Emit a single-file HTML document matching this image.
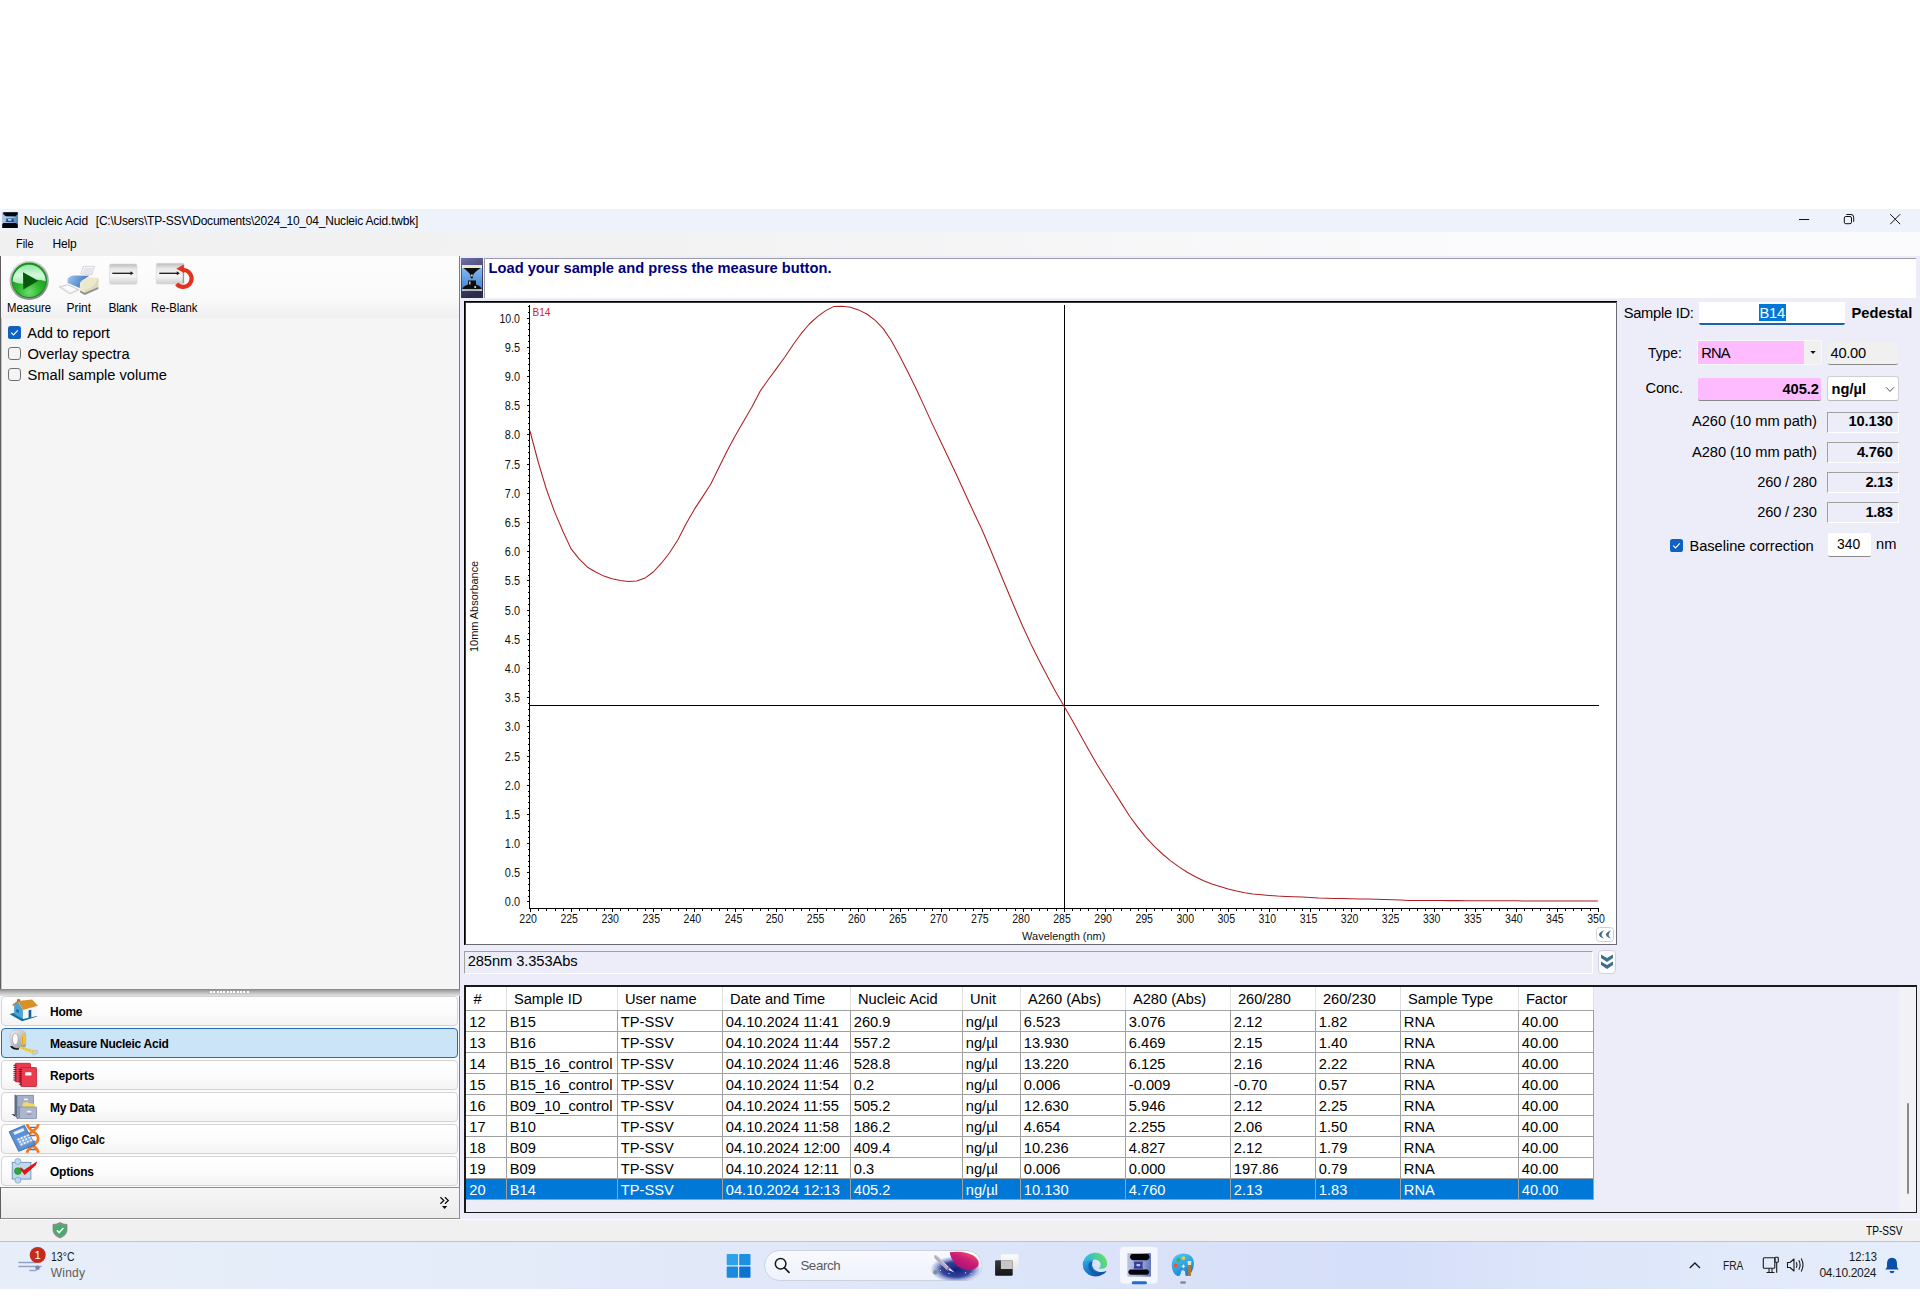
<!DOCTYPE html>
<html lang="en"><head><meta charset="utf-8"><title>Nucleic Acid</title>
<style>
html,body{margin:0;padding:0}
body{width:1920px;height:1312px;position:relative;overflow:hidden;background:#fff;font-family:"Liberation Sans",sans-serif;color:#000}
.abs{position:absolute}
.t{position:absolute;white-space:nowrap;line-height:1;display:block}
div{box-sizing:border-box}
#titlebar{left:0;top:209px;width:1920px;height:23px;background:#eef3fb}
#menubar{left:0;top:232px;width:1920px;height:24px;background:linear-gradient(90deg,#f0f0f0 0,#f2f2f3 35%,#fbfbfd 80%,#fbfbfd 100%)}
#client{left:0;top:256px;width:1920px;height:963px;background:#ededf9}
#left{left:0;top:256px;width:460px;height:962px;background:#f5f5f5;border-left:1px solid #5e5e5e;border-right:1px solid #7c7c7c;box-shadow:inset 1px 0 0 #c4c4c4}
#toolbar{left:1px;top:256px;width:458px;height:62px;background:linear-gradient(180deg,#fdfdfd 0,#f9f9f9 70%,#f0f0f0 100%)}
.nav{position:absolute;left:1px;width:457px;height:30px;border:1px solid #d4d4d4;border-radius:4px;background:linear-gradient(180deg,#ffffff 0,#fbfbfb 60%,#f3f3f3 100%)}
.nav.sel{background:#cce4f7;border-color:#2a6cb0}
.sunk{position:absolute;border:1px solid;border-color:#a0a0a0 #fff #fff #a0a0a0;background:#ededf9}
table.grid{position:absolute;left:466px;top:987px;border-collapse:collapse;table-layout:fixed;font-size:14.67px;background:#fff}
table.grid td,table.grid th{height:18px;padding:2px 0 0 3.3px;border:1px solid #a0a0a0;border-top:0;text-align:left;font-weight:normal;white-space:nowrap;overflow:hidden;line-height:18px}
table.grid th{height:21px;line-height:21px;padding-left:7.4px;border-color:#a0a0a0;border-left:0;border-right:1px solid #e2e2e2;border-top:0}
table.grid tr.sel td{background:#0078d7;color:#fff}
table.grid td:first-child{border-left:0}
</style></head><body>

<div id="titlebar" class="abs"></div>
<svg class="abs" style="left:2px;top:212px;" width="16" height="16" viewBox="0 0 16 16"><defs><linearGradient id="ai1" x1="0" y1="0" x2="1" y2="0"><stop offset="0" stop-color="#b4c8e4"/><stop offset="0.550" stop-color="#8fb0d8"/><stop offset="1" stop-color="#4f7fb8"/></linearGradient></defs>
<rect x="0" y="0" width="16" height="16" rx="1" fill="url(#ai1)"/>
<path d="M1.500,0.200 h13.800 q1,1 -0.200,2.500 l-1.600,1.500 h-9.500 l-2.200,-1.500 q-1.200,-1.500 -0.300,-2.500z" fill="#04050a"/>
<path d="M3.200,5.300 h9.600 l-1,1 h-7.600z" fill="#c8d8ec" opacity="0.700"/>
<path d="M4.300,6.400 h7.400 v2.800 l1.600,0.900 h-10.600 l1.600,-0.900z" fill="#1b4c8c"/>
<rect x="5.900" y="7.100" width="3.800" height="1.700" rx="0.800" fill="#b4dcff"/>
<path d="M1.200,11 h12.800 l1.700,1.600 v3.400 h-15.500 v-3.400z" fill="#04050a"/></svg>
<span class="t" style="left:23.80px;top:215px;font-size:12px;letter-spacing:-0.097px;">Nucleic Acid</span>
<span class="t" style="left:95.80px;top:215px;font-size:12px;letter-spacing:-0.212px;">[C:\Users\TP-SSV\Documents\2024_10_04_Nucleic Acid.twbk]</span>
<svg class="abs" style="left:1790px;top:209px;" width="130" height="23" viewBox="1790 209 130 23"><g fill="none" stroke="#111" stroke-width="1">
<path d="M1799,219.500h10.200"/>
<rect x="1844.300" y="216.500" width="7.200" height="7.200" rx="1.500"/>
<path d="M1846.300,214.500h4.700q2.700,0 2.700,2.700v4.600"/>
<path d="M1890.200,214.200l10,10M1900.200,214.200l-10,10"/>
</g></svg>
<div id="menubar" class="abs"></div>
<span class="t" style="left:15.60px;top:238px;font-size:12px;transform:scaleX(0.9096);transform-origin:0 0;">File</span>
<span class="t" style="left:52.50px;top:238px;font-size:12px;letter-spacing:-0.130px;">Help</span>
<div id="client" class="abs"></div>
<div id="left" class="abs"></div>
<div id="toolbar" class="abs"></div>
<svg class="abs" style="left:0px;top:256px;" width="220" height="50" viewBox="0 256 220 50"><defs>
<radialGradient id="g1" cx="0.500" cy="0.850" r="0.700"><stop offset="0" stop-color="#6fdc6f"/><stop offset="0.500" stop-color="#2db52d"/><stop offset="1" stop-color="#149a1a"/></radialGradient>
<linearGradient id="g5" x1="0" y1="0" x2="0" y2="1"><stop offset="0" stop-color="#8fe6a4"/><stop offset="0.550" stop-color="#d4f8dc"/><stop offset="1" stop-color="#a8ecb8"/></linearGradient>
<linearGradient id="g2" x1="0" y1="0" x2="0.300" y2="1"><stop offset="0" stop-color="#e4e4e4"/><stop offset="0.500" stop-color="#b4b4b4"/><stop offset="1" stop-color="#8e8e8e"/></linearGradient>
<linearGradient id="g3" x1="0" y1="0" x2="0" y2="1"><stop offset="0" stop-color="#bcbcbc"/><stop offset="0.250" stop-color="#e8e8e8"/><stop offset="0.600" stop-color="#f6f6f6"/><stop offset="1" stop-color="#cfcfcf"/></linearGradient>
<linearGradient id="g4" x1="0" y1="0" x2="1" y2="0.300"><stop offset="0" stop-color="#a4c6ec"/><stop offset="0.500" stop-color="#6a9cd8"/><stop offset="1" stop-color="#4074b8"/></linearGradient>
</defs>
<circle cx="29.200" cy="280.300" r="19.600" fill="url(#g2)"/>
<circle cx="29.200" cy="280.300" r="17.800" fill="#1a8c24"/>
<circle cx="29.200" cy="280.300" r="16.700" fill="url(#g1)"/>
<path d="M12.700,281.300 a16.500,16.500 0 0 1 33,0 q-8.200,-3.500 -16.500,0.500 q-8.300,4 -16.500,-0.500z" fill="url(#g5)"/>
<path d="M23,272.200 L38.300,280.700 L23.300,289.600z" fill="#075a0a"/>
<!-- printer -->
<path d="M83.400,266.300 h11.200 l-2.900,8.600 l-10.900,-1.100z" fill="#f6f6f8" stroke="#c0c0c6" stroke-width="0.600"/>
<path d="M84.500,268 h8.500 l-2,6 l-8.300,-0.800z" fill="#e4e4ea"/>
<path d="M67.600,278.900 q2,-3 6.900,-3.400 l14.900,0.300 q-2.500,1.200 -4.600,3.100 q-4,3 -4.600,4 l-0.500,5.200 l-12.100,-5.200z" fill="url(#g4)"/>
<path d="M80.200,282.900 q0.600,-2.500 4.600,-4 q2,-1.500 4.600,-1.700 l8,0.600 q1.200,0.800 1.200,2.300 l-0.300,6.800 l-13.500,5.800 l-4.600,-2.300z" fill="#ece8cc"/>
<path d="M84.800,292.700 l13.500,-5.800 l0.300,-6.800 q0,-1.500 -1.200,-2.300 q-0.500,4 -3,7 q-4,4 -9.600,5z" fill="#d8d4b4" opacity="0.700"/>
<path d="M80.200,290.400 l4.600,2.300 l13.500,-5.800 v2 l-13.500,6.200 l-4.600,-2.500z" fill="#8e9288"/>
<path d="M59.300,286.900 l8.300,-2.200 l11.500,5.100 l-9.200,4z" fill="#ececf0" stroke="#b4b4ba" stroke-width="0.600"/>
<path d="M62.500,287 l5,-1.400 l9,4 l-5.800,2.500z" fill="#fbfbfd"/>
<!-- blank -->
<rect x="109.500" y="264" width="27.500" height="20.200" rx="1.500" fill="url(#g3)" stroke="#d8d8d8" stroke-width="0.600"/>
<path d="M112.300,273.300 h19" stroke="#1a1a1a" stroke-width="1.300"/><path d="M130.500,271.300 l3,2 l-3,2z" fill="#1a1a1a"/>
<!-- reblank -->
<rect x="156.200" y="263.300" width="28" height="20.800" rx="1.500" fill="url(#g3)" stroke="#d8d8d8" stroke-width="0.600"/>
<path d="M183.300,271 v12" stroke="#888" stroke-width="1"/>
<path d="M159.300,273.300 h18.500" stroke="#1a1a1a" stroke-width="1.300"/><path d="M176.800,271.300 l3,2 l-3,2z" fill="#1a1a1a"/>
<path d="M182,270.100 a8.400,8.400 0 1 1 -5.300,13.700" fill="none" stroke="#e23222" stroke-width="4.200"/>
<path d="M176.300,268.800 l7.400,-4.200 l0.500,8.400z" fill="#e23222"/></svg>
<span class="t" style="left:6.90px;top:302px;font-size:12px;transform:scaleX(0.9426);transform-origin:0 0;">Measure</span>
<span class="t" style="left:66.50px;top:302px;font-size:12px;letter-spacing:-0.015px;">Print</span>
<span class="t" style="left:108.60px;top:302px;font-size:12px;letter-spacing:-0.365px;">Blank</span>
<span class="t" style="left:150.50px;top:302px;font-size:12px;transform:scaleX(0.9417);transform-origin:0 0;">Re-Blank</span>
<svg class="abs" style="left:8px;top:326px;" width="13" height="13" viewBox="0 0 13 13"><rect x="0" y="0" width="13" height="13" rx="2.600" fill="#0f62c0"/><path d="M3.200,6.700l2.300,2.300l4.300,-4.600" fill="none" stroke="#fff" stroke-width="1.100"/></svg>
<svg class="abs" style="left:8px;top:347px;" width="13" height="13" viewBox="0 0 13 13"><rect x="0.500" y="0.500" width="12" height="12" rx="2.600" fill="#f4f4f4" stroke="#6e6e6e" stroke-width="1"/></svg>
<svg class="abs" style="left:8px;top:368px;" width="13" height="13" viewBox="0 0 13 13"><rect x="0.500" y="0.500" width="12" height="12" rx="2.600" fill="#f4f4f4" stroke="#6e6e6e" stroke-width="1"/></svg>
<span class="t" style="left:27.30px;top:326px;font-size:14.67px;letter-spacing:-0.194px;">Add to report</span>
<span class="t" style="left:27.50px;top:347px;font-size:14.67px;letter-spacing:-0.040px;">Overlay spectra</span>
<span class="t" style="left:27.50px;top:368px;font-size:14.67px;">Small sample volume</span>
<div class="abs" style="left:0px;top:989px;width:460px;height:7px;background:linear-gradient(180deg,#858585 0,#b4b4b4 40%,#e4e4e4 100%)"></div>
<div class="abs" style="left:210px;top:991px;width:40px;height:2px;background:repeating-linear-gradient(90deg,#fff 0,#fff 2px,rgba(255,255,255,0) 2px,rgba(255,255,255,0) 3.33px)"></div>
<div class="abs" style="left:0;top:996px;width:459px;height:191px;background:#fafafa"></div>
<div class="nav" style="top:996px"></div>
<span class="t" style="left:50.00px;top:1006px;font-size:12px;letter-spacing:-0.277px;font-weight:bold;">Home</span>
<div class="nav sel" style="top:1028px"></div>
<span class="t" style="left:50.00px;top:1038px;font-size:12px;letter-spacing:-0.253px;font-weight:bold;">Measure Nucleic Acid</span>
<div class="nav" style="top:1060px"></div>
<span class="t" style="left:50.00px;top:1070px;font-size:12px;letter-spacing:-0.138px;font-weight:bold;">Reports</span>
<div class="nav" style="top:1092px"></div>
<span class="t" style="left:50.00px;top:1102px;font-size:12px;letter-spacing:-0.180px;font-weight:bold;">My Data</span>
<div class="nav" style="top:1124px"></div>
<span class="t" style="left:50.00px;top:1134px;font-size:12px;transform:scaleX(0.9269);transform-origin:0 0;font-weight:bold;">Oligo Calc</span>
<div class="nav" style="top:1156px"></div>
<span class="t" style="left:50.00px;top:1166px;font-size:12px;letter-spacing:-0.222px;font-weight:bold;">Options</span>
<svg class="abs" style="left:0px;top:990px;" width="60" height="200" viewBox="0 990 60 200"><polygon points="9.5,1014.1 22.1,1021.3 37.3,1016.4 25.2,1009.9" fill="#176c9c" /><polygon points="14.1,1005.3 17.9,1001.5 22.9,1009.9 22.9,1019.1 14.1,1014.1" fill="#4aa5d8" /><polygon points="22.9,1009.9 37.0,1006.5 37.0,1016.0 22.9,1019.1" fill="#f4f8fc" /><polygon points="28.6,1010.3 31.3,1009.7 31.3,1017.5 28.6,1018.1" fill="#1a5f8a" /><polygon points="16.4,1009.1 18.7,1010.3 18.7,1013.0 16.4,1011.8" fill="#1a5f8a" /><polygon points="17.1,999.2 20.2,999.2 20.2,1002.0 17.1,1002.0" fill="#a86a18" /><polygon points="17.9,1001.1 32.0,999.6 38.0,1005.7 22.9,1009.9" fill="#d8902a" /><polygon points="12.2,1004.9 17.9,1000.6 18.6,1001.6 13.2,1006.0" fill="#b87820" /><defs><linearGradient id="tm1" x1="0" y1="0" x2="1" y2="1"><stop offset="0" stop-color="#f2f2f4"/><stop offset="0.500" stop-color="#c4c4ca"/><stop offset="1" stop-color="#8e8e96"/></linearGradient></defs><path d="M10,1046 q3,4.800 9,3.600 l-0.500,-3.600z" fill="#0c0c0c"/><path d="M9.900,1037 q0,-7 6.500,-7 h3.500 q6,0.300 6,6 v8.500 q0,3.500 -4,3.500 h-6 q-6,-1 -6,-11z" fill="url(#tm1)" stroke="#a2a2aa" stroke-width="0.400"/><ellipse cx="15.300" cy="1039" rx="2.900" ry="5.700" fill="#fdfdfe" stroke="#9a9aa4" stroke-width="0.700"/><path d="M21,1035 q2.500,-1.500 4.800,0 v9.500 h-4.800z" fill="#f2c232"/><path d="M22.500,1036.500 v7" stroke="#d89a18" stroke-width="0.800"/><polygon points="19.8,1046.3 35.8,1050.5 32.8,1053.7 20.2,1048.6" fill="#f2d446" /><path d="M23,1047.800 l1.200,1.500 M26,1048.600 l1.200,1.600 M29,1049.500 l1.200,1.600" stroke="#b08a10" stroke-width="0.500"/><polygon points="32.5,1051.3 37.5,1050.3 37.8,1053.2 33.0,1055.3" fill="#d0d0d6" stroke="#a0a0a8" stroke-width="0.400"/><rect x="15.2" y="1063.3" width="15.3" height="18.6" rx="1" fill="#ea3c4e" stroke="#b8202e" stroke-width="0.800"/><path d="M13.4,1065.3h3.200" stroke="#5a1018" stroke-width="0.900"/><path d="M13.4,1067.4h3.200" stroke="#5a1018" stroke-width="0.900"/><path d="M13.4,1069.5h3.200" stroke="#5a1018" stroke-width="0.900"/><path d="M13.4,1071.6h3.200" stroke="#5a1018" stroke-width="0.900"/><path d="M13.4,1073.7h3.200" stroke="#5a1018" stroke-width="0.900"/><path d="M13.4,1075.8h3.200" stroke="#5a1018" stroke-width="0.900"/><path d="M13.4,1077.9h3.200" stroke="#5a1018" stroke-width="0.900"/><path d="M13.4,1080.0h3.200" stroke="#5a1018" stroke-width="0.900"/><rect x="20.6" y="1067.5" width="16.0" height="19.0" rx="1" fill="#ea3c4e" stroke="#b8202e" stroke-width="0.800"/><path d="M18.8,1069.5h3.200" stroke="#5a1018" stroke-width="0.900"/><path d="M18.8,1071.6h3.200" stroke="#5a1018" stroke-width="0.900"/><path d="M18.8,1073.7h3.200" stroke="#5a1018" stroke-width="0.900"/><path d="M18.8,1075.8h3.200" stroke="#5a1018" stroke-width="0.900"/><path d="M18.8,1077.9h3.200" stroke="#5a1018" stroke-width="0.900"/><path d="M18.8,1080.0h3.200" stroke="#5a1018" stroke-width="0.900"/><path d="M18.8,1082.1h3.200" stroke="#5a1018" stroke-width="0.900"/><path d="M18.8,1084.2h3.200" stroke="#5a1018" stroke-width="0.900"/><rect x="25.200" y="1072.200" width="6.200" height="3.300" rx="0.600" fill="#fff"/><polygon points="11.4,1114.3 19.0,1118.8 17.1,1118.8 14.5,1114.3" fill="#222" /><polygon points="14.5,1094.5 17.1,1095.6 17.1,1118.1 14.5,1114.3" fill="#5c6c86" /><rect x="17.100" y="1095.200" width="16.400" height="23" fill="#8d98b2"/><rect x="17.100" y="1095.200" width="16.400" height="12" fill="#a4aec6" stroke="#70809c" stroke-width="0.600"/><rect x="24" y="1098.600" width="4" height="1.600" fill="#f4f6fa"/><polygon points="22.1,1107.4 23.2,1102.6 28.0,1102.0 29.0,1103.3 35.0,1103.8 34.3,1107.4" fill="#f2d868" /><rect x="19.400" y="1107" width="17.200" height="11.600" fill="#acb6cc" stroke="#70809c" stroke-width="0.600"/><rect x="27" y="1110.800" width="4.300" height="1.600" fill="#f4f6fa"/><rect x="26.700" y="1113.600" width="5" height="1.400" fill="#8e98b0"/><path d="M29,1127.300h7.500M29,1149.500h7.500M30,1135.500h5.500M30,1141.500h5.500" stroke="#3878c0" stroke-width="1.300"/><path d="M27.300,1124 C27.300,1131.500 38.200,1131 38.200,1138.500 C38.200,1146 27.300,1145.500 27.300,1152.800 M38.200,1124 C38.200,1131.500 27.300,1131 27.300,1138.500 C27.300,1146 38.200,1145.500 38.200,1152.800" fill="none" stroke="#f07a22" stroke-width="2.700"/><polygon points="9.1,1131.8 24.4,1125.3 35.1,1144.8 18.7,1151.3" fill="#5a90d4" stroke="#2f5fa8" stroke-width="0.800"/><polygon points="13.3,1132.2 23.2,1128.0 24.4,1130.7 14.5,1134.9" fill="#e4eefa" /><polygon points="16.0,1139.1 29.0,1133.7 33.5,1141.4 20.6,1147.1" fill="#7fa8dc" /><rect x="17.3" y="1138.9" width="2.100" height="1.700" fill="#eef4fc" transform="rotate(-22 17.3 1138.9)"/><rect x="20.4" y="1137.6" width="2.100" height="1.700" fill="#eef4fc" transform="rotate(-22 20.4 1137.6)"/><rect x="23.5" y="1136.3" width="2.100" height="1.700" fill="#eef4fc" transform="rotate(-22 23.5 1136.3)"/><rect x="26.6" y="1135.0" width="2.100" height="1.700" fill="#eef4fc" transform="rotate(-22 26.6 1135.0)"/><rect x="18.8" y="1141.4" width="2.100" height="1.700" fill="#eef4fc" transform="rotate(-22 18.8 1141.4)"/><rect x="21.9" y="1140.1" width="2.100" height="1.700" fill="#eef4fc" transform="rotate(-22 21.9 1140.1)"/><rect x="24.9" y="1138.8" width="2.100" height="1.700" fill="#eef4fc" transform="rotate(-22 24.9 1138.8)"/><rect x="28.1" y="1137.5" width="2.100" height="1.700" fill="#eef4fc" transform="rotate(-22 28.1 1137.5)"/><rect x="20.2" y="1143.9" width="2.100" height="1.700" fill="#eef4fc" transform="rotate(-22 20.2 1143.9)"/><rect x="23.3" y="1142.6" width="2.100" height="1.700" fill="#eef4fc" transform="rotate(-22 23.3 1142.6)"/><rect x="26.4" y="1141.3" width="2.100" height="1.700" fill="#eef4fc" transform="rotate(-22 26.4 1141.3)"/><rect x="29.5" y="1140.0" width="2.100" height="1.700" fill="#eef4fc" transform="rotate(-22 29.5 1140.0)"/><rect x="12.200" y="1162.300" width="18.700" height="16.800" fill="#c4d8ec" stroke="#5c88b0" stroke-width="0.800"/><circle cx="17.900" cy="1161.500" r="3" fill="#bcd8f0" stroke="#6c98c0" stroke-width="0.600"/><circle cx="17.900" cy="1180.200" r="3" fill="#bcd8f0" stroke="#6c98c0" stroke-width="0.600"/><circle cx="17.900" cy="1171.100" r="3.400" fill="#2fa83a" stroke="#1c7c28" stroke-width="0.600"/><polygon points="20.6,1166.9 24.0,1169.9 37.3,1161.2 35.8,1165.2 24.6,1175.0 20.2,1169.0" fill="#e21212" /></svg>
<div class="abs" style="left:0;top:1187px;width:460px;height:32px;background:linear-gradient(180deg,#f6f6f6,#ececec);border:1px solid #8e8e8e;border-left:1px solid #5e5e5e"></div>
<svg class="abs" style="left:436px;top:1194px;" width="16" height="18" viewBox="436 1194 16 18"><path d="M440.400,1197.300l3.400,3.200l-3.400,3.200M444.900,1197.300l3.400,3.200l-3.400,3.200" fill="none" stroke="#111" stroke-width="1.300"/><path d="M441.900,1206h5.400l-2.700,3.100z" fill="#111"/></svg>
<svg class="abs" style="left:461px;top:258px;" width="22" height="40" viewBox="0 0 22 40"><defs><linearGradient id="pp1" x1="0" y1="0" x2="0.300" y2="1"><stop offset="0" stop-color="#7070a8"/><stop offset="0.500" stop-color="#4a4a78"/><stop offset="1" stop-color="#2c2c48"/></linearGradient>
<linearGradient id="pp2" x1="0" y1="0" x2="0" y2="1"><stop offset="0" stop-color="#8cc0f4"/><stop offset="1" stop-color="#3f80d0"/></linearGradient></defs>
<rect x="0" y="0" width="22" height="40" fill="url(#pp1)"/>
<rect x="1" y="7" width="20" height="26" fill="url(#pp2)"/>
<rect x="1" y="7" width="20" height="3" fill="#ece6cc"/>
<path d="M2.500,10 h17 q-5,3.500 -7,6 l-1,4.500 h-1.500 l-1,-4.500 q-2,-2.500 -6.500,-6z" fill="#0c0c0c"/>
<path d="M7,22.500 h8 v4 q5,1.500 6,5 q-10,3 -20,0 q1,-3.500 6,-5z" fill="#0e0e0e"/>
<rect x="1" y="31" width="20" height="2" fill="#d8dce8" opacity="0.800"/>
<circle cx="10.800" cy="17.600" r="1" fill="#e8e8e8"/><rect x="8.200" y="23.500" width="1.200" height="3" fill="#eee"/><circle cx="14.200" cy="29" r="1" fill="#f4e8d0"/></svg>
<div class="abs" style="left:484px;top:258px;width:1432px;height:40px;background:#fff;border-top:1px solid #9c9ca4;border-left:1px solid #9c9ca4"></div>
<span class="t" style="left:488.60px;top:261px;font-size:14.67px;font-weight:bold;color:#000080;">Load your sample and press the measure button.</span>
<svg class="abs" style="left:464px;top:301px" width="1153" height="644" viewBox="464 301 1153 644" font-family="Liberation Sans, sans-serif">
<rect x="464" y="301" width="1153" height="644" fill="#fff"/>
<g shape-rendering="crispEdges">
<rect x="464" y="301" width="1153" height="1" fill="#000"/><rect x="465" y="302" width="1151" height="1" fill="#3a3a3a"/>
<rect x="464" y="301" width="1" height="644" fill="#000"/><rect x="465" y="302" width="1" height="642" fill="#3a3a3a"/>
<rect x="465" y="944" width="1152" height="1" fill="#6a6a6e"/>
<rect x="1616" y="302" width="1" height="643" fill="#6a6a6e"/>
<rect x="529" y="305" width="1" height="604" fill="#000"/>
<rect x="529" y="908" width="1070" height="1" fill="#000"/>
<rect x="527" y="901" width="2" height="1" fill="#000"/>
<rect x="528" y="896" width="1" height="1" fill="#000"/>
<rect x="528" y="890" width="1" height="1" fill="#000"/>
<rect x="528" y="884" width="1" height="1" fill="#000"/>
<rect x="528" y="878" width="1" height="1" fill="#000"/>
<rect x="527" y="872" width="2" height="1" fill="#000"/>
<rect x="528" y="866" width="1" height="1" fill="#000"/>
<rect x="528" y="861" width="1" height="1" fill="#000"/>
<rect x="528" y="855" width="1" height="1" fill="#000"/>
<rect x="528" y="849" width="1" height="1" fill="#000"/>
<rect x="527" y="843" width="2" height="1" fill="#000"/>
<rect x="528" y="837" width="1" height="1" fill="#000"/>
<rect x="528" y="831" width="1" height="1" fill="#000"/>
<rect x="528" y="826" width="1" height="1" fill="#000"/>
<rect x="528" y="820" width="1" height="1" fill="#000"/>
<rect x="527" y="814" width="2" height="1" fill="#000"/>
<rect x="528" y="808" width="1" height="1" fill="#000"/>
<rect x="528" y="802" width="1" height="1" fill="#000"/>
<rect x="528" y="796" width="1" height="1" fill="#000"/>
<rect x="528" y="791" width="1" height="1" fill="#000"/>
<rect x="527" y="785" width="2" height="1" fill="#000"/>
<rect x="528" y="779" width="1" height="1" fill="#000"/>
<rect x="528" y="773" width="1" height="1" fill="#000"/>
<rect x="528" y="767" width="1" height="1" fill="#000"/>
<rect x="528" y="761" width="1" height="1" fill="#000"/>
<rect x="527" y="756" width="2" height="1" fill="#000"/>
<rect x="528" y="750" width="1" height="1" fill="#000"/>
<rect x="528" y="744" width="1" height="1" fill="#000"/>
<rect x="528" y="738" width="1" height="1" fill="#000"/>
<rect x="528" y="732" width="1" height="1" fill="#000"/>
<rect x="527" y="726" width="2" height="1" fill="#000"/>
<rect x="528" y="720" width="1" height="1" fill="#000"/>
<rect x="528" y="715" width="1" height="1" fill="#000"/>
<rect x="528" y="709" width="1" height="1" fill="#000"/>
<rect x="528" y="703" width="1" height="1" fill="#000"/>
<rect x="527" y="697" width="2" height="1" fill="#000"/>
<rect x="528" y="691" width="1" height="1" fill="#000"/>
<rect x="528" y="685" width="1" height="1" fill="#000"/>
<rect x="528" y="680" width="1" height="1" fill="#000"/>
<rect x="528" y="674" width="1" height="1" fill="#000"/>
<rect x="527" y="668" width="2" height="1" fill="#000"/>
<rect x="528" y="662" width="1" height="1" fill="#000"/>
<rect x="528" y="656" width="1" height="1" fill="#000"/>
<rect x="528" y="650" width="1" height="1" fill="#000"/>
<rect x="528" y="645" width="1" height="1" fill="#000"/>
<rect x="527" y="639" width="2" height="1" fill="#000"/>
<rect x="528" y="633" width="1" height="1" fill="#000"/>
<rect x="528" y="627" width="1" height="1" fill="#000"/>
<rect x="528" y="621" width="1" height="1" fill="#000"/>
<rect x="528" y="615" width="1" height="1" fill="#000"/>
<rect x="527" y="610" width="2" height="1" fill="#000"/>
<rect x="528" y="604" width="1" height="1" fill="#000"/>
<rect x="528" y="598" width="1" height="1" fill="#000"/>
<rect x="528" y="592" width="1" height="1" fill="#000"/>
<rect x="528" y="586" width="1" height="1" fill="#000"/>
<rect x="527" y="580" width="2" height="1" fill="#000"/>
<rect x="528" y="575" width="1" height="1" fill="#000"/>
<rect x="528" y="569" width="1" height="1" fill="#000"/>
<rect x="528" y="563" width="1" height="1" fill="#000"/>
<rect x="528" y="557" width="1" height="1" fill="#000"/>
<rect x="527" y="551" width="2" height="1" fill="#000"/>
<rect x="528" y="545" width="1" height="1" fill="#000"/>
<rect x="528" y="539" width="1" height="1" fill="#000"/>
<rect x="528" y="534" width="1" height="1" fill="#000"/>
<rect x="528" y="528" width="1" height="1" fill="#000"/>
<rect x="527" y="522" width="2" height="1" fill="#000"/>
<rect x="528" y="516" width="1" height="1" fill="#000"/>
<rect x="528" y="510" width="1" height="1" fill="#000"/>
<rect x="528" y="504" width="1" height="1" fill="#000"/>
<rect x="528" y="499" width="1" height="1" fill="#000"/>
<rect x="527" y="493" width="2" height="1" fill="#000"/>
<rect x="528" y="487" width="1" height="1" fill="#000"/>
<rect x="528" y="481" width="1" height="1" fill="#000"/>
<rect x="528" y="475" width="1" height="1" fill="#000"/>
<rect x="528" y="469" width="1" height="1" fill="#000"/>
<rect x="527" y="464" width="2" height="1" fill="#000"/>
<rect x="528" y="458" width="1" height="1" fill="#000"/>
<rect x="528" y="452" width="1" height="1" fill="#000"/>
<rect x="528" y="446" width="1" height="1" fill="#000"/>
<rect x="528" y="440" width="1" height="1" fill="#000"/>
<rect x="527" y="434" width="2" height="1" fill="#000"/>
<rect x="528" y="429" width="1" height="1" fill="#000"/>
<rect x="528" y="423" width="1" height="1" fill="#000"/>
<rect x="528" y="417" width="1" height="1" fill="#000"/>
<rect x="528" y="411" width="1" height="1" fill="#000"/>
<rect x="527" y="405" width="2" height="1" fill="#000"/>
<rect x="528" y="399" width="1" height="1" fill="#000"/>
<rect x="528" y="393" width="1" height="1" fill="#000"/>
<rect x="528" y="388" width="1" height="1" fill="#000"/>
<rect x="528" y="382" width="1" height="1" fill="#000"/>
<rect x="527" y="376" width="2" height="1" fill="#000"/>
<rect x="528" y="370" width="1" height="1" fill="#000"/>
<rect x="528" y="364" width="1" height="1" fill="#000"/>
<rect x="528" y="358" width="1" height="1" fill="#000"/>
<rect x="528" y="353" width="1" height="1" fill="#000"/>
<rect x="527" y="347" width="2" height="1" fill="#000"/>
<rect x="528" y="341" width="1" height="1" fill="#000"/>
<rect x="528" y="335" width="1" height="1" fill="#000"/>
<rect x="528" y="329" width="1" height="1" fill="#000"/>
<rect x="528" y="323" width="1" height="1" fill="#000"/>
<rect x="527" y="318" width="2" height="1" fill="#000"/>
<rect x="528" y="312" width="1" height="1" fill="#000"/>
<rect x="528" y="306" width="1" height="1" fill="#000"/>
<rect x="530" y="909" width="1" height="3" fill="#000"/>
<rect x="538" y="909" width="1" height="2" fill="#000"/>
<rect x="546" y="909" width="1" height="2" fill="#000"/>
<rect x="555" y="909" width="1" height="2" fill="#000"/>
<rect x="563" y="909" width="1" height="2" fill="#000"/>
<rect x="571" y="909" width="1" height="3" fill="#000"/>
<rect x="579" y="909" width="1" height="2" fill="#000"/>
<rect x="587" y="909" width="1" height="2" fill="#000"/>
<rect x="596" y="909" width="1" height="2" fill="#000"/>
<rect x="604" y="909" width="1" height="2" fill="#000"/>
<rect x="612" y="909" width="1" height="3" fill="#000"/>
<rect x="620" y="909" width="1" height="2" fill="#000"/>
<rect x="628" y="909" width="1" height="2" fill="#000"/>
<rect x="637" y="909" width="1" height="2" fill="#000"/>
<rect x="645" y="909" width="1" height="2" fill="#000"/>
<rect x="653" y="909" width="1" height="3" fill="#000"/>
<rect x="661" y="909" width="1" height="2" fill="#000"/>
<rect x="670" y="909" width="1" height="2" fill="#000"/>
<rect x="678" y="909" width="1" height="2" fill="#000"/>
<rect x="686" y="909" width="1" height="2" fill="#000"/>
<rect x="694" y="909" width="1" height="3" fill="#000"/>
<rect x="702" y="909" width="1" height="2" fill="#000"/>
<rect x="711" y="909" width="1" height="2" fill="#000"/>
<rect x="719" y="909" width="1" height="2" fill="#000"/>
<rect x="727" y="909" width="1" height="2" fill="#000"/>
<rect x="735" y="909" width="1" height="3" fill="#000"/>
<rect x="743" y="909" width="1" height="2" fill="#000"/>
<rect x="752" y="909" width="1" height="2" fill="#000"/>
<rect x="760" y="909" width="1" height="2" fill="#000"/>
<rect x="768" y="909" width="1" height="2" fill="#000"/>
<rect x="776" y="909" width="1" height="3" fill="#000"/>
<rect x="785" y="909" width="1" height="2" fill="#000"/>
<rect x="793" y="909" width="1" height="2" fill="#000"/>
<rect x="801" y="909" width="1" height="2" fill="#000"/>
<rect x="809" y="909" width="1" height="2" fill="#000"/>
<rect x="817" y="909" width="1" height="3" fill="#000"/>
<rect x="826" y="909" width="1" height="2" fill="#000"/>
<rect x="834" y="909" width="1" height="2" fill="#000"/>
<rect x="842" y="909" width="1" height="2" fill="#000"/>
<rect x="850" y="909" width="1" height="2" fill="#000"/>
<rect x="858" y="909" width="1" height="3" fill="#000"/>
<rect x="867" y="909" width="1" height="2" fill="#000"/>
<rect x="875" y="909" width="1" height="2" fill="#000"/>
<rect x="883" y="909" width="1" height="2" fill="#000"/>
<rect x="891" y="909" width="1" height="2" fill="#000"/>
<rect x="900" y="909" width="1" height="3" fill="#000"/>
<rect x="908" y="909" width="1" height="2" fill="#000"/>
<rect x="916" y="909" width="1" height="2" fill="#000"/>
<rect x="924" y="909" width="1" height="2" fill="#000"/>
<rect x="932" y="909" width="1" height="2" fill="#000"/>
<rect x="941" y="909" width="1" height="3" fill="#000"/>
<rect x="949" y="909" width="1" height="2" fill="#000"/>
<rect x="957" y="909" width="1" height="2" fill="#000"/>
<rect x="965" y="909" width="1" height="2" fill="#000"/>
<rect x="973" y="909" width="1" height="2" fill="#000"/>
<rect x="982" y="909" width="1" height="3" fill="#000"/>
<rect x="990" y="909" width="1" height="2" fill="#000"/>
<rect x="998" y="909" width="1" height="2" fill="#000"/>
<rect x="1006" y="909" width="1" height="2" fill="#000"/>
<rect x="1015" y="909" width="1" height="2" fill="#000"/>
<rect x="1023" y="909" width="1" height="3" fill="#000"/>
<rect x="1031" y="909" width="1" height="2" fill="#000"/>
<rect x="1039" y="909" width="1" height="2" fill="#000"/>
<rect x="1047" y="909" width="1" height="2" fill="#000"/>
<rect x="1056" y="909" width="1" height="2" fill="#000"/>
<rect x="1064" y="909" width="1" height="3" fill="#000"/>
<rect x="1072" y="909" width="1" height="2" fill="#000"/>
<rect x="1080" y="909" width="1" height="2" fill="#000"/>
<rect x="1088" y="909" width="1" height="2" fill="#000"/>
<rect x="1097" y="909" width="1" height="2" fill="#000"/>
<rect x="1105" y="909" width="1" height="3" fill="#000"/>
<rect x="1113" y="909" width="1" height="2" fill="#000"/>
<rect x="1121" y="909" width="1" height="2" fill="#000"/>
<rect x="1130" y="909" width="1" height="2" fill="#000"/>
<rect x="1138" y="909" width="1" height="2" fill="#000"/>
<rect x="1146" y="909" width="1" height="3" fill="#000"/>
<rect x="1154" y="909" width="1" height="2" fill="#000"/>
<rect x="1162" y="909" width="1" height="2" fill="#000"/>
<rect x="1171" y="909" width="1" height="2" fill="#000"/>
<rect x="1179" y="909" width="1" height="2" fill="#000"/>
<rect x="1187" y="909" width="1" height="3" fill="#000"/>
<rect x="1195" y="909" width="1" height="2" fill="#000"/>
<rect x="1203" y="909" width="1" height="2" fill="#000"/>
<rect x="1212" y="909" width="1" height="2" fill="#000"/>
<rect x="1220" y="909" width="1" height="2" fill="#000"/>
<rect x="1228" y="909" width="1" height="3" fill="#000"/>
<rect x="1236" y="909" width="1" height="2" fill="#000"/>
<rect x="1245" y="909" width="1" height="2" fill="#000"/>
<rect x="1253" y="909" width="1" height="2" fill="#000"/>
<rect x="1261" y="909" width="1" height="2" fill="#000"/>
<rect x="1269" y="909" width="1" height="3" fill="#000"/>
<rect x="1277" y="909" width="1" height="2" fill="#000"/>
<rect x="1286" y="909" width="1" height="2" fill="#000"/>
<rect x="1294" y="909" width="1" height="2" fill="#000"/>
<rect x="1302" y="909" width="1" height="2" fill="#000"/>
<rect x="1310" y="909" width="1" height="3" fill="#000"/>
<rect x="1319" y="909" width="1" height="2" fill="#000"/>
<rect x="1327" y="909" width="1" height="2" fill="#000"/>
<rect x="1335" y="909" width="1" height="2" fill="#000"/>
<rect x="1343" y="909" width="1" height="2" fill="#000"/>
<rect x="1351" y="909" width="1" height="3" fill="#000"/>
<rect x="1360" y="909" width="1" height="2" fill="#000"/>
<rect x="1368" y="909" width="1" height="2" fill="#000"/>
<rect x="1376" y="909" width="1" height="2" fill="#000"/>
<rect x="1384" y="909" width="1" height="2" fill="#000"/>
<rect x="1392" y="909" width="1" height="3" fill="#000"/>
<rect x="1401" y="909" width="1" height="2" fill="#000"/>
<rect x="1409" y="909" width="1" height="2" fill="#000"/>
<rect x="1417" y="909" width="1" height="2" fill="#000"/>
<rect x="1425" y="909" width="1" height="2" fill="#000"/>
<rect x="1434" y="909" width="1" height="3" fill="#000"/>
<rect x="1442" y="909" width="1" height="2" fill="#000"/>
<rect x="1450" y="909" width="1" height="2" fill="#000"/>
<rect x="1458" y="909" width="1" height="2" fill="#000"/>
<rect x="1466" y="909" width="1" height="2" fill="#000"/>
<rect x="1475" y="909" width="1" height="3" fill="#000"/>
<rect x="1483" y="909" width="1" height="2" fill="#000"/>
<rect x="1491" y="909" width="1" height="2" fill="#000"/>
<rect x="1499" y="909" width="1" height="2" fill="#000"/>
<rect x="1507" y="909" width="1" height="2" fill="#000"/>
<rect x="1516" y="909" width="1" height="3" fill="#000"/>
<rect x="1524" y="909" width="1" height="2" fill="#000"/>
<rect x="1532" y="909" width="1" height="2" fill="#000"/>
<rect x="1540" y="909" width="1" height="2" fill="#000"/>
<rect x="1549" y="909" width="1" height="2" fill="#000"/>
<rect x="1557" y="909" width="1" height="3" fill="#000"/>
<rect x="1565" y="909" width="1" height="2" fill="#000"/>
<rect x="1573" y="909" width="1" height="2" fill="#000"/>
<rect x="1581" y="909" width="1" height="2" fill="#000"/>
<rect x="1590" y="909" width="1" height="2" fill="#000"/>
<rect x="1598" y="909" width="1" height="3" fill="#000"/>
<rect x="1064" y="305" width="1" height="603" fill="#000"/>
<rect x="530" y="705" width="1069" height="1" fill="#000"/>
</g>
<g font-size="12" fill="#111">
<text x="504.8" y="906" textLength="15.2" lengthAdjust="spacingAndGlyphs">0.0</text>
<text x="504.8" y="877" textLength="15.2" lengthAdjust="spacingAndGlyphs">0.5</text>
<text x="504.8" y="848" textLength="15.2" lengthAdjust="spacingAndGlyphs">1.0</text>
<text x="504.8" y="819" textLength="15.2" lengthAdjust="spacingAndGlyphs">1.5</text>
<text x="504.8" y="790" textLength="15.2" lengthAdjust="spacingAndGlyphs">2.0</text>
<text x="504.8" y="761" textLength="15.2" lengthAdjust="spacingAndGlyphs">2.5</text>
<text x="504.8" y="731" textLength="15.2" lengthAdjust="spacingAndGlyphs">3.0</text>
<text x="504.8" y="702" textLength="15.2" lengthAdjust="spacingAndGlyphs">3.5</text>
<text x="504.8" y="673" textLength="15.2" lengthAdjust="spacingAndGlyphs">4.0</text>
<text x="504.8" y="644" textLength="15.2" lengthAdjust="spacingAndGlyphs">4.5</text>
<text x="504.8" y="615" textLength="15.2" lengthAdjust="spacingAndGlyphs">5.0</text>
<text x="504.8" y="585" textLength="15.2" lengthAdjust="spacingAndGlyphs">5.5</text>
<text x="504.8" y="556" textLength="15.2" lengthAdjust="spacingAndGlyphs">6.0</text>
<text x="504.8" y="527" textLength="15.2" lengthAdjust="spacingAndGlyphs">6.5</text>
<text x="504.8" y="498" textLength="15.2" lengthAdjust="spacingAndGlyphs">7.0</text>
<text x="504.8" y="469" textLength="15.2" lengthAdjust="spacingAndGlyphs">7.5</text>
<text x="504.8" y="439" textLength="15.2" lengthAdjust="spacingAndGlyphs">8.0</text>
<text x="504.8" y="410" textLength="15.2" lengthAdjust="spacingAndGlyphs">8.5</text>
<text x="504.8" y="381" textLength="15.2" lengthAdjust="spacingAndGlyphs">9.0</text>
<text x="504.8" y="352" textLength="15.2" lengthAdjust="spacingAndGlyphs">9.5</text>
<text x="499.4" y="323" textLength="20.6" lengthAdjust="spacingAndGlyphs">10.0</text>
<text x="519.3" y="923" textLength="17.6" lengthAdjust="spacingAndGlyphs">220</text>
<text x="560.4" y="923" textLength="17.6" lengthAdjust="spacingAndGlyphs">225</text>
<text x="601.4" y="923" textLength="17.6" lengthAdjust="spacingAndGlyphs">230</text>
<text x="642.5" y="923" textLength="17.6" lengthAdjust="spacingAndGlyphs">235</text>
<text x="683.6" y="923" textLength="17.6" lengthAdjust="spacingAndGlyphs">240</text>
<text x="724.7" y="923" textLength="17.6" lengthAdjust="spacingAndGlyphs">245</text>
<text x="765.7" y="923" textLength="17.6" lengthAdjust="spacingAndGlyphs">250</text>
<text x="806.8" y="923" textLength="17.6" lengthAdjust="spacingAndGlyphs">255</text>
<text x="847.9" y="923" textLength="17.6" lengthAdjust="spacingAndGlyphs">260</text>
<text x="889.0" y="923" textLength="17.6" lengthAdjust="spacingAndGlyphs">265</text>
<text x="930.0" y="923" textLength="17.6" lengthAdjust="spacingAndGlyphs">270</text>
<text x="971.1" y="923" textLength="17.6" lengthAdjust="spacingAndGlyphs">275</text>
<text x="1012.2" y="923" textLength="17.6" lengthAdjust="spacingAndGlyphs">280</text>
<text x="1053.2" y="923" textLength="17.6" lengthAdjust="spacingAndGlyphs">285</text>
<text x="1094.3" y="923" textLength="17.6" lengthAdjust="spacingAndGlyphs">290</text>
<text x="1135.4" y="923" textLength="17.6" lengthAdjust="spacingAndGlyphs">295</text>
<text x="1176.5" y="923" textLength="17.6" lengthAdjust="spacingAndGlyphs">300</text>
<text x="1217.5" y="923" textLength="17.6" lengthAdjust="spacingAndGlyphs">305</text>
<text x="1258.6" y="923" textLength="17.6" lengthAdjust="spacingAndGlyphs">310</text>
<text x="1299.7" y="923" textLength="17.6" lengthAdjust="spacingAndGlyphs">315</text>
<text x="1340.8" y="923" textLength="17.6" lengthAdjust="spacingAndGlyphs">320</text>
<text x="1381.8" y="923" textLength="17.6" lengthAdjust="spacingAndGlyphs">325</text>
<text x="1422.9" y="923" textLength="17.6" lengthAdjust="spacingAndGlyphs">330</text>
<text x="1464.0" y="923" textLength="17.6" lengthAdjust="spacingAndGlyphs">335</text>
<text x="1505.1" y="923" textLength="17.6" lengthAdjust="spacingAndGlyphs">340</text>
<text x="1546.1" y="923" textLength="17.6" lengthAdjust="spacingAndGlyphs">345</text>
<text x="1587.2" y="923" textLength="17.6" lengthAdjust="spacingAndGlyphs">350</text>
</g>
<text x="1022.1" y="940" font-size="11" fill="#111" textLength="83.3" lengthAdjust="spacingAndGlyphs">Wavelength (nm)</text>
<text transform="translate(478.1,652) rotate(-90)" font-size="11" fill="#111" textLength="91.2" lengthAdjust="spacingAndGlyphs">10mm Absorbance</text>
<text x="532.5" y="316" font-size="11.5" fill="#c8282d" textLength="18" lengthAdjust="spacingAndGlyphs">B14</text>
<path d="M530.0,431.0 L538.2,462.0 L546.4,489.3 L554.6,511.9 L562.9,531.3 L571.1,548.9 L579.3,559.2 L587.5,567.2 L595.7,572.0 L603.9,576.1 L612.1,578.7 L620.4,580.6 L628.6,581.4 L636.8,581.0 L645.0,578.1 L653.2,572.0 L661.4,563.2 L669.6,552.7 L677.9,539.7 L686.1,523.8 L694.3,509.4 L702.5,496.9 L710.7,484.3 L718.9,467.5 L727.2,450.8 L735.4,435.4 L743.6,421.2 L751.8,407.3 L760.0,391.4 L768.2,379.7 L776.4,368.6 L784.7,357.2 L792.9,345.0 L801.1,333.7 L809.3,324.0 L817.5,316.6 L825.7,310.6 L833.9,306.4 L842.2,306.2 L850.4,307.2 L858.6,309.9 L866.8,314.0 L875.0,320.2 L883.2,328.6 L891.4,340.7 L899.7,356.1 L907.9,372.0 L916.1,388.8 L924.3,406.4 L932.5,424.4 L940.7,441.6 L948.9,458.8 L957.2,476.2 L965.4,494.3 L973.6,512.0 L981.8,529.2 L990.0,548.5 L998.2,568.3 L1006.4,588.0 L1014.7,607.8 L1022.9,626.8 L1031.1,644.4 L1039.3,660.8 L1047.5,676.4 L1055.7,691.7 L1063.9,705.9 L1072.2,720.2 L1080.4,735.0 L1088.6,749.8 L1096.8,764.0 L1105.0,777.2 L1113.2,790.3 L1121.5,803.4 L1129.7,816.2 L1137.9,827.4 L1146.1,837.6 L1154.3,846.3 L1162.5,854.0 L1170.7,860.8 L1179.0,866.9 L1187.2,872.3 L1195.4,876.7 L1203.6,880.7 L1211.8,884.0 L1220.0,886.5 L1228.2,889.0 L1236.5,891.1 L1244.7,892.7 L1252.9,894.1 L1261.1,894.8 L1269.3,895.5 L1277.5,896.1 L1285.7,896.5 L1294.0,896.8 L1302.2,897.1 L1310.4,897.5 L1318.6,898.0 L1326.8,898.2 L1335.0,898.4 L1343.2,898.6 L1351.5,898.7 L1359.7,898.9 L1367.9,899.1 L1376.1,899.3 L1384.3,899.6 L1392.5,899.8 L1400.7,900.0 L1409.0,900.4 L1417.2,900.4 L1425.4,900.5 L1433.6,900.5 L1441.8,900.6 L1450.0,900.6 L1458.3,900.6 L1466.5,900.7 L1474.7,900.7 L1482.9,900.7 L1491.1,900.8 L1499.3,900.8 L1507.5,900.8 L1515.8,900.8 L1524.0,900.9 L1532.2,900.9 L1540.4,900.9 L1548.6,900.9 L1556.8,900.9 L1565.0,900.9 L1573.3,901.0 L1581.5,901.0 L1589.7,901.0 L1597.9,901.0" fill="none" stroke="#ae1e22" stroke-width="1.05" stroke-linejoin="round"/>
<rect x="1596.5" y="927.5" width="17" height="14" rx="3" fill="#fff" stroke="#d0d0d8"/>
<path d="M1604.2,930.2 q-10.6,4.300 0,8.600 q-5,-4.300 0,-8.600z M1611.2,930.2 q-10.600,4.300 0,8.600 q-5,-4.300 0,-8.600z" fill="#3f6f8e"/>
</svg>
<div class="abs" style="left:464px;top:951px;width:1129px;height:23px;border:1px solid;border-color:#a0a0a0 #fff #fff #a0a0a0;background:#ededf9"></div>
<span class="t" style="left:467.70px;top:954px;font-size:14.67px;letter-spacing:-0.072px;">285nm 3.353Abs</span>
<svg class="abs" style="left:1598px;top:950px;" width="18" height="24" viewBox="0 0 18 24"><rect x="0.500" y="0.500" width="17" height="23" rx="3.500" fill="#fdfdfe" stroke="#d2d2da"/>
<path d="M3,4.500 l6,3.500 l6,-3.500 v3.500 l-6,4 l-6,-4z M3,11.500 l6,3.500 l6,-3.500 v3.500 l-6,4 l-6,-4z" fill="#3f6f8e"/></svg>
<span class="t" style="left:1623.70px;top:306px;font-size:14.67px;letter-spacing:-0.253px;">Sample ID:</span>
<div class="abs" style="left:1699px;top:302px;width:146px;height:23px;background:#fff;border-bottom:2px solid #1c62ad;border-radius:0 0 2px 2px"></div>
<div class="abs" style="left:1759px;top:304px;width:27px;height:17px;background:#0078d7"></div>
<span class="t" style="left:1759.60px;top:306px;font-size:14.67px;letter-spacing:-0.256px;color:#fff;">B14</span>
<span class="t" style="left:1851.40px;top:306px;font-size:14.67px;letter-spacing:0.081px;font-weight:bold;">Pedestal</span>
<span class="t" style="left:1648.40px;top:346px;font-size:14.67px;transform:scaleX(0.9451);transform-origin:0 0;">Type:</span>
<div class="abs" style="left:1697px;top:340px;width:125px;height:25px;background:#f0f0f0;border:1px solid #f8f8fc;border-radius:2px"></div>
<div class="abs" style="left:1698px;top:341px;width:106px;height:23px;background:#ffbbff"></div>
<svg class="abs" style="left:1809px;top:350px" width="8" height="5" viewBox="0 0 8 5"><path d="M1.3,1h5.400L4,4z" fill="#111"/></svg>
<span class="t" style="left:1701.20px;top:346px;font-size:14.67px;letter-spacing:-0.745px;">RNA</span>
<div class="abs" style="left:1828px;top:342px;width:70px;height:23px;background:#f0f0f0;border-bottom:1px solid #8a8a8a;border-radius:2px"></div>
<span class="t" style="left:1830.60px;top:346px;font-size:14.67px;letter-spacing:-0.303px;">40.00</span>
<span class="t" style="left:1645.50px;top:381px;font-size:14.67px;letter-spacing:-0.206px;">Conc.</span>
<div class="abs" style="left:1698px;top:378px;width:123px;height:23px;background:#ffbbff;border-bottom:1px solid #8a8a8a;border-radius:2px"></div>
<span class="t" style="left:1782.50px;top:382px;font-size:14.67px;letter-spacing:-0.053px;font-weight:bold;">405.2</span>
<div class="abs" style="left:1827px;top:376px;width:72px;height:25px;background:#fff;border:1px solid #d0d0d4;border-bottom-color:#b8b8bc;border-radius:3px"></div>
<span class="t" style="left:1831.50px;top:382px;font-size:14.67px;font-weight:bold;">ng/µl</span>
<svg class="abs" style="left:1885px;top:386px" width="10" height="7" viewBox="0 0 10 7"><path d="M1,1.2L5,5.4L9,1.2" fill="none" stroke="#555" stroke-width="1"/></svg>
<span class="t" style="left:1692.00px;top:414px;font-size:14.67px;letter-spacing:-0.036px;">A260 (10 mm path)</span>
<div class="sunk" style="left:1827px;top:412px;width:72px;height:21px"></div>
<span class="t" style="left:1848.40px;top:414px;font-size:14.67px;letter-spacing:-0.071px;font-weight:bold;">10.130</span>
<span class="t" style="left:1692.00px;top:445px;font-size:14.67px;letter-spacing:-0.036px;">A280 (10 mm path)</span>
<div class="sunk" style="left:1827px;top:442px;width:72px;height:21px"></div>
<span class="t" style="left:1856.90px;top:445px;font-size:14.67px;letter-spacing:-0.178px;font-weight:bold;">4.760</span>
<span class="t" style="left:1757.30px;top:475px;font-size:14.67px;letter-spacing:-0.184px;">260 / 280</span>
<div class="sunk" style="left:1827px;top:472px;width:72px;height:21px"></div>
<span class="t" style="left:1865.40px;top:475px;font-size:14.67px;letter-spacing:-0.357px;font-weight:bold;">2.13</span>
<span class="t" style="left:1757.30px;top:505px;font-size:14.67px;letter-spacing:-0.184px;">260 / 230</span>
<div class="sunk" style="left:1827px;top:502px;width:72px;height:21px"></div>
<span class="t" style="left:1865.40px;top:505px;font-size:14.67px;letter-spacing:-0.357px;font-weight:bold;">1.83</span>
<svg class="abs" style="left:1670px;top:539px;" width="13" height="13" viewBox="0 0 13 13"><rect x="0" y="0" width="13" height="13" rx="2.600" fill="#0f62c0"/><path d="M3.200,6.700l2.300,2.300l4.300,-4.600" fill="none" stroke="#fff" stroke-width="1.100"/></svg>
<span class="t" style="left:1689.40px;top:539px;font-size:14.67px;letter-spacing:-0.020px;">Baseline correction</span>
<div class="abs" style="left:1828px;top:533px;width:43px;height:24px;background:#fff;border-bottom:1px solid #8a8a8a;border-radius:2px"></div>
<span class="t" style="left:1837.40px;top:537px;font-size:14.67px;transform:scaleX(0.9484);transform-origin:0 0;">340</span>
<span class="t" style="left:1876.00px;top:537px;font-size:14.67px;letter-spacing:0.209px;">nm</span>
<div class="abs" style="left:464px;top:985px;width:1453px;height:228px;border:2px solid #1a1a1a;border-right-width:1px;border-bottom-width:1px;background:#ededf9"></div>
<div class="abs" style="left:1899px;top:987px;width:17px;height:225px;background:#f1f1f6"></div>
<div class="abs" style="left:1907px;top:1103px;width:2px;height:91px;background:#8a8a8a;border-radius:1px"></div>
<table class="grid" style="width:1127px"><colgroup><col style="width:40px"><col style="width:111px"><col style="width:105px"><col style="width:128px"><col style="width:112px"><col style="width:58px"><col style="width:105px"><col style="width:105px"><col style="width:85px"><col style="width:85px"><col style="width:118px"><col style="width:75px"></colgroup>
<thead><tr><th>#</th><th>Sample ID</th><th>User name</th><th>Date and Time</th><th>Nucleic Acid</th><th>Unit</th><th>A260 (Abs)</th><th>A280 (Abs)</th><th>260/280</th><th>260/230</th><th>Sample Type</th><th>Factor</th></tr></thead><tbody>
<tr><td>12</td><td>B15</td><td>TP-SSV</td><td>04.10.2024 11:41</td><td>260.9</td><td>ng/µl</td><td>6.523</td><td>3.076</td><td>2.12</td><td>1.82</td><td>RNA</td><td>40.00</td></tr>
<tr><td>13</td><td>B16</td><td>TP-SSV</td><td>04.10.2024 11:44</td><td>557.2</td><td>ng/µl</td><td>13.930</td><td>6.469</td><td>2.15</td><td>1.40</td><td>RNA</td><td>40.00</td></tr>
<tr><td>14</td><td>B15_16_control</td><td>TP-SSV</td><td>04.10.2024 11:46</td><td>528.8</td><td>ng/µl</td><td>13.220</td><td>6.125</td><td>2.16</td><td>2.22</td><td>RNA</td><td>40.00</td></tr>
<tr><td>15</td><td>B15_16_control</td><td>TP-SSV</td><td>04.10.2024 11:54</td><td>0.2</td><td>ng/µl</td><td>0.006</td><td>-0.009</td><td>-0.70</td><td>0.57</td><td>RNA</td><td>40.00</td></tr>
<tr><td>16</td><td>B09_10_control</td><td>TP-SSV</td><td>04.10.2024 11:55</td><td>505.2</td><td>ng/µl</td><td>12.630</td><td>5.946</td><td>2.12</td><td>2.25</td><td>RNA</td><td>40.00</td></tr>
<tr><td>17</td><td>B10</td><td>TP-SSV</td><td>04.10.2024 11:58</td><td>186.2</td><td>ng/µl</td><td>4.654</td><td>2.255</td><td>2.06</td><td>1.50</td><td>RNA</td><td>40.00</td></tr>
<tr><td>18</td><td>B09</td><td>TP-SSV</td><td>04.10.2024 12:00</td><td>409.4</td><td>ng/µl</td><td>10.236</td><td>4.827</td><td>2.12</td><td>1.79</td><td>RNA</td><td>40.00</td></tr>
<tr><td>19</td><td>B09</td><td>TP-SSV</td><td>04.10.2024 12:11</td><td>0.3</td><td>ng/µl</td><td>0.006</td><td>0.000</td><td>197.86</td><td>0.79</td><td>RNA</td><td>40.00</td></tr>
<tr class="sel"><td>20</td><td>B14</td><td>TP-SSV</td><td>04.10.2024 12:13</td><td>405.2</td><td>ng/µl</td><td>10.130</td><td>4.760</td><td>2.13</td><td>1.83</td><td>RNA</td><td>40.00</td></tr>
</tbody></table>
<div class="abs" style="left:0;top:1219px;width:1920px;height:23px;background:#f0f0f0;border-top:1px solid #fafafa"></div>
<svg class="abs" style="left:52px;top:1222px;" width="16" height="17" viewBox="0 0 16 17"><path d="M8,0.500 q3.500,2 7,2 v5.500 q0,5 -7,8 q-7,-3 -7,-8 v-5.500 q3.500,0 7,-2z" fill="#8a9298" stroke="#6a7278" stroke-width="0.600"/>
<path d="M8,2.300 q2.800,1.500 5.500,1.600 v4.300 q0,4 -5.500,6.300 q-5.500,-2.300 -5.500,-6.300 v-4.300 q2.700,-0.100 5.500,-1.600z" fill="#3fb060"/>
<path d="M4.800,8.200 l2.400,2.400 l4.200,-4.600" fill="none" stroke="#fff" stroke-width="1.500"/></svg>
<span class="t" style="left:1865.80px;top:1225px;font-size:12px;transform:scaleX(0.8420);transform-origin:0 0;">TP-SSV</span>
<div class="abs" style="left:0;top:1241px;width:1920px;height:48px;background:linear-gradient(90deg,#e7eef9 0,#e4ecf9 25%,#dfe7f9 45%,#dae2f9 60%,#d6dff9 72%,#dfe8fa 86%,#e6eefa 100%);border-top:1px solid #bcc4d2"></div>
<svg class="abs" style="left:0px;top:1242px;" width="1920" height="47" viewBox="0 1242 1920 47"><path d="M19,1262.500h17M19,1266.500h22M30,1270.500h6" stroke="#8fa4c8" stroke-width="1.600" stroke-linecap="round" fill="none"/><circle cx="37.500" cy="1267.800" r="2.300" fill="#6f8ab8"/><circle cx="37.700" cy="1255" r="8" fill="#c42b1c"/><text x="37.700" y="1259.300" font-family="Liberation Sans, sans-serif" font-size="11.500" fill="#fff" text-anchor="middle">1</text><rect x="726.7" y="1253.9" width="11.300" height="11.300" rx="0.800" fill="#2ea2e8"/><rect x="739.2" y="1253.9" width="11.300" height="11.300" rx="0.800" fill="#1b90e0"/><rect x="726.7" y="1266.4" width="11.300" height="11.300" rx="0.800" fill="#1a8ade"/><rect x="739.2" y="1266.4" width="11.300" height="11.300" rx="0.800" fill="#0a74d0"/><defs><linearGradient id="sp" x1="0" y1="0" x2="0" y2="1"><stop offset="0" stop-color="#f8fafe"/><stop offset="1" stop-color="#eef2fb"/></linearGradient><clipPath id="spc"><rect x="764.500" y="1250.500" width="217.500" height="30" rx="15"/></clipPath><radialGradient id="pl" cx="0.400" cy="0.350" r="0.700"><stop offset="0" stop-color="#f08ab0"/><stop offset="0.550" stop-color="#d0306a"/><stop offset="1" stop-color="#701848"/></radialGradient></defs><rect x="764.500" y="1250.500" width="217.500" height="30" rx="15" fill="url(#sp)" stroke="#ccd2de" stroke-width="1"/><defs><radialGradient id="spb" cx="0.500" cy="0.550" r="0.500"><stop offset="0" stop-color="#14207a"/><stop offset="0.550" stop-color="#2a3c98" stop-opacity="0.950"/><stop offset="0.850" stop-color="#8c9cd8" stop-opacity="0.450"/><stop offset="1" stop-color="#eef2fb" stop-opacity="0"/></radialGradient><linearGradient id="plg" x1="0.200" y1="1" x2="0.900" y2="0"><stop offset="0" stop-color="#9c1070"/><stop offset="0.550" stop-color="#cc1c78"/><stop offset="0.850" stop-color="#e8486c"/><stop offset="1" stop-color="#f88050"/></linearGradient></defs><g clip-path="url(#spc)"><ellipse cx="956" cy="1268" rx="27" ry="14" fill="url(#spb)"/><path d="M949.800,1252.300 q14,-2 24,3.500 q7,5 4,10.500 q-5,5.500 -13,3.500 q-9,-3 -13,-11 q-2,-4 -2,-6.500z" fill="url(#plg)"/><path d="M934.400,1255.600 q1.500,-1 3,0.500 l12.500,11.800 l-2.600,2.600 l-12,-11.500 q-1.700,-1.800 -0.900,-3.400z" fill="#b4acbc"/><path d="M936,1255.500 l12.500,12" stroke="#e4e0ea" stroke-width="0.800"/><path d="M949.800,1268 l4.800,4.600 l-6.300,-2.600z" fill="#dff0fc"/><path d="M946.800,1270.800 l1.200,-3.500 l2.600,-0.300z" fill="#7a7890"/><circle cx="935.300" cy="1272.200" r="2.200" fill="#6a8c98" opacity="0.850"/><circle cx="940.500" cy="1270.500" r="0.500" fill="#fff"/><circle cx="949" cy="1273.500" r="0.600" fill="#fff"/><circle cx="965.500" cy="1272.800" r="0.600" fill="#fff"/><circle cx="971" cy="1273.500" r="0.500" fill="#fff"/></g><circle cx="780.600" cy="1263.800" r="5.300" fill="none" stroke="#1a1a1a" stroke-width="1.500"/><path d="M784.500,1267.800l4.500,4.500" stroke="#1a1a1a" stroke-width="1.700" stroke-linecap="round"/><defs><linearGradient id="tv1" x1="0" y1="0" x2="0" y2="1"><stop offset="0" stop-color="#fcfcfc"/><stop offset="1" stop-color="#e6e6e8"/></linearGradient><linearGradient id="tv2" x1="0" y1="0" x2="0" y2="1"><stop offset="0" stop-color="#3a3a3a"/><stop offset="1" stop-color="#141414"/></linearGradient></defs><rect x="1000.900" y="1254.200" width="17.600" height="14.800" rx="1.200" fill="url(#tv1)"/><rect x="995.100" y="1260.200" width="17.600" height="15.600" rx="1.200" fill="url(#tv2)"/><rect x="1000.900" y="1260.200" width="11.800" height="8.800" fill="#c6c6c6"/><defs><linearGradient id="ed1" x1="0.100" y1="0.200" x2="0.700" y2="1"><stop offset="0" stop-color="#2f9fe4"/><stop offset="0.550" stop-color="#1674c8"/><stop offset="1" stop-color="#0c4f9c"/></linearGradient><linearGradient id="ed2" x1="0" y1="0.600" x2="1" y2="0.300"><stop offset="0" stop-color="#28b4e8"/><stop offset="0.450" stop-color="#3cc8b4"/><stop offset="1" stop-color="#6ee05c"/></linearGradient></defs><path d="M1083,1261.500 q-1.500,8.500 5.500,13 q7.500,4.200 15.500,-0.800 q1.800,-1.200 2.500,-3 q-3.500,2 -8,1 q-6.500,-2 -6.500,-8.500 q0.300,-3.500 3,-5.200 q-6.500,-0.500 -12,3.500z" fill="url(#ed1)"/><path d="M1083,1262 q2.500,-8 11,-9.200 q9,-0.600 12.500,7.200 q2,6 -1.500,8 q-2.500,1.200 -6.500,0.500 q2.500,-1.500 2.200,-4.300 q-0.800,-4.200 -5.700,-4.700 q-7,-0.200 -12,2.500z" fill="url(#ed2)"/><path d="M1092.700,1262.300 q-2.200,3.200 -0.500,6.800 q2,3.800 6.800,4 q-5.800,1.200 -9.300,-2.800 q-2.800,-4.200 0,-8.300 q1.500,-0.200 3,0.300z" fill="#0e5aa8" opacity="0.850"/><rect x="1119.500" y="1246.500" width="38.500" height="37.500" rx="4" fill="#f3f6fc" stroke="#dde3ee" stroke-width="0.800"/><defs><linearGradient id="ai2" x1="0" y1="0" x2="1" y2="0"><stop offset="0" stop-color="#b8c4e4"/><stop offset="0.600" stop-color="#98a8d8"/><stop offset="1" stop-color="#6076b8"/></linearGradient></defs><rect x="1127.300" y="1253.100" width="23.700" height="23.700" rx="1" fill="url(#ai2)"/><path d="M1131.500,1253.900 h16.500 q3.200,2.900 0,5.800 l-1.500,0.600 h-13.500 l-1.500,-0.600 q-3.200,-2.900 0,-5.800z" fill="#04040a"/><path d="M1130,1269.500 h17.500 q3.500,2.600 0,5.200 h-17.500 q-3.500,-2.600 0,-5.200z" fill="#04040a"/><path d="M1133.700,1261.400 h9.300 q-1.200,3.700 0,7.400 h-9.300 q1.200,-3.700 0,-7.400z" fill="#383c98"/><rect x="1136.300" y="1264" width="4" height="2.200" rx="1" fill="#b8c8f0"/><rect x="1131.700" y="1281.300" width="15.300" height="3" rx="1.500" fill="#1a6fd0"/><defs><linearGradient id="pt1" x1="0.200" y1="0" x2="0.700" y2="1"><stop offset="0" stop-color="#4cc8f0"/><stop offset="0.600" stop-color="#2a9fe0"/><stop offset="1" stop-color="#1a78c8"/></linearGradient></defs><path d="M1183.500,1253.500 q10.500,0.300 10.500,10 q-0.300,6 -3,9.500 l-3.500,3 q-2.500,0.500 -2.300,-2.500 q0.300,-3.500 -2.500,-3.300 q-2,0.500 -2,3.300 q-0.500,3 -3.200,2.500 q-5.500,-2.500 -5.800,-11 q0.500,-11 11.800,-11.500z" fill="url(#pt1)"/><circle cx="1175.500" cy="1265.500" r="1.900" fill="#e8563a"/><circle cx="1178.400" cy="1260" r="1.900" fill="#3fb33f"/><circle cx="1183.400" cy="1258.100" r="1.900" fill="#f4c63a"/><path d="M1183.400,1264.200 l0.700,1.400 l1.400,0.700 l-1.400,0.700 l-0.700,1.400 l-0.700,-1.400 l-1.400,-0.700 l1.400,-0.700z" fill="#fff"/><path d="M1187.500,1261 h3.900 l-0.400,4.200 h-3.100z" fill="#f0dcc0"/><path d="M1188.300,1265 h2.600 l0.200,10.500 q-1.500,1 -3,0z" fill="#b87828"/><rect x="1180.100" y="1281.200" width="5.900" height="2.500" rx="1.250" fill="#858a94"/><path d="M1689.800,1268 l5.100,-5 l5.100,5" fill="none" stroke="#1a1a1a" stroke-width="1.300"/><g fill="none" stroke="#1a1a1a" stroke-width="1.100"><rect x="1763.300" y="1257.800" width="11.500" height="10.500" rx="1"/><path d="M1766.500,1272.500h8M1769,1268.500v4M1772,1268.500v4"/><rect x="1775" y="1257.300" width="3.300" height="5" rx="0.800"/><path d="M1776.700,1262.300v10.500"/></g><g fill="none" stroke="#1a1a1a" stroke-width="1.100" stroke-linejoin="round"><path d="M1787.500,1262.500h2.500l4,-3.500v12l-4,-3.500h-2.500z"/><path d="M1796.300,1262.200q1.500,2.800 0,5.600M1798.800,1260.300q2.600,4.700 0,9.400M1801.200,1258.500q3.600,6.500 0,13"/></g><path d="M1892,1257.800 q5,0 5,6 v3.200 l1.700,2.600 h-13.400 l1.700,-2.600 v-3.200 q0,-6 5,-6z" fill="#0b4fa8"/><path d="M1889.500,1271 h5 q-0.500,2.200 -2.500,2.200 q-2,0 -2.500,-2.200z" fill="#0b4fa8"/></svg>
<span class="t" style="left:50.70px;top:1251px;font-size:12px;transform:scaleX(0.8762);transform-origin:0 0;color:#1a1a1a;">13°C</span>
<span class="t" style="left:50.70px;top:1267px;font-size:12px;letter-spacing:0.242px;color:#5c5c5c;">Windy</span>
<span class="t" style="left:800.40px;top:1259px;font-size:13.3px;letter-spacing:-0.386px;color:#5a5a5a;">Search</span>
<span class="t" style="left:1722.80px;top:1260px;font-size:12px;transform:scaleX(0.8500);transform-origin:0 0;color:#1a1a1a;">FRA</span>
<span class="t" style="left:1848.50px;top:1251px;font-size:12px;transform:scaleX(0.9324);transform-origin:0 0;color:#1a1a1a;">12:13</span>
<span class="t" style="left:1819.40px;top:1267px;font-size:12px;letter-spacing:-0.329px;color:#1a1a1a;">04.10.2024</span>
</body></html>
